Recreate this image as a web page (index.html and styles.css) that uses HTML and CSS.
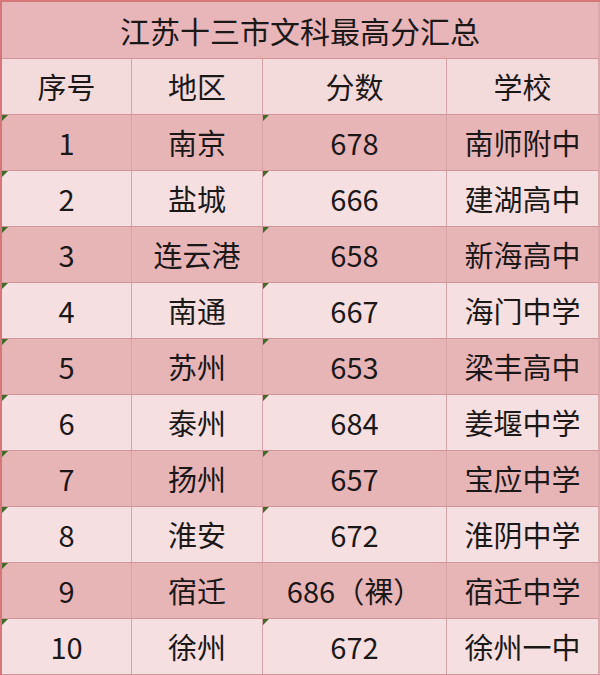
FILE: index.html
```html
<!DOCTYPE html>
<html lang="zh-CN">
<head>
<meta charset="utf-8">
<title>江苏十三市文科最高分汇总</title>
<link rel="stylesheet" href="styles.css">
</head>
<body>
<div class="table">
  <div class="cell title">江苏十三市文科最高分汇总</div>
  <div class="cell head">序号</div>
  <div class="cell head">地区</div>
  <div class="cell head">分数</div>
  <div class="cell head last">学校</div>

  <div class="cell dark mark">1</div><div class="cell dark">南京</div><div class="cell dark mark">678</div><div class="cell dark last">南师附中</div>
  <div class="cell light mark">2</div><div class="cell light">盐城</div><div class="cell light mark">666</div><div class="cell light last">建湖高中</div>
  <div class="cell dark mark">3</div><div class="cell dark">连云港</div><div class="cell dark mark">658</div><div class="cell dark last">新海高中</div>
  <div class="cell light mark">4</div><div class="cell light">南通</div><div class="cell light mark">667</div><div class="cell light last">海门中学</div>
  <div class="cell dark mark">5</div><div class="cell dark">苏州</div><div class="cell dark mark">653</div><div class="cell dark last">梁丰高中</div>
  <div class="cell light mark">6</div><div class="cell light">泰州</div><div class="cell light mark">684</div><div class="cell light last">姜堰中学</div>
  <div class="cell dark mark">7</div><div class="cell dark">扬州</div><div class="cell dark mark">657</div><div class="cell dark last">宝应中学</div>
  <div class="cell light mark">8</div><div class="cell light">淮安</div><div class="cell light mark">672</div><div class="cell light last">淮阴中学</div>
  <div class="cell dark mark">9</div><div class="cell dark">宿迁</div><div class="cell dark">686（裸）</div><div class="cell dark last">宿迁中学</div>
  <div class="cell light mark">10</div><div class="cell light">徐州</div><div class="cell light mark">672</div><div class="cell light last">徐州一中</div>
</div>
</body>
</html>
```
FILE: styles.css
```css
html, body {
  margin: 0;
  padding: 0;
  background: #f5dfe0;
}

.table {
  width: 600px;
  height: 675px;
  display: grid;
  grid-template-columns: 130px 131px 184px 153px;
  grid-template-rows: 57px repeat(11, 1fr);
  box-sizing: border-box;
  border-top: 2px solid #d6777b;
  border-left: 2px solid #d6777b;
  font-family: "Noto Sans CJK SC", "Noto Sans", sans-serif;
  font-size: 29px;
  color: #1c1818;
}

.cell {
  display: flex;
  align-items: center;
  justify-content: center;
  border-right: 1px solid #d7a3a6;
  border-bottom: 1px solid #d49598;
  position: relative;
  line-height: 1;
}

.cell.last {
  border-right: 2px solid #dba9ab;
}

.title {
  grid-column: 1 / 5;
  background: #e8b6b8;
  font-size: 30px;
  border-right: 2px solid #dba9ab;
}

.head {
  background: #f3dbdc;
}

.dark {
  background: #e8b5b7;
}

.light {
  background: #f5dfe0;
}

.mark::before {
  content: "";
  position: absolute;
  left: 0;
  top: 0;
  width: 0;
  height: 0;
  border-top: 6px solid #3f6a2c;
  border-right: 6px solid transparent;
}
```
